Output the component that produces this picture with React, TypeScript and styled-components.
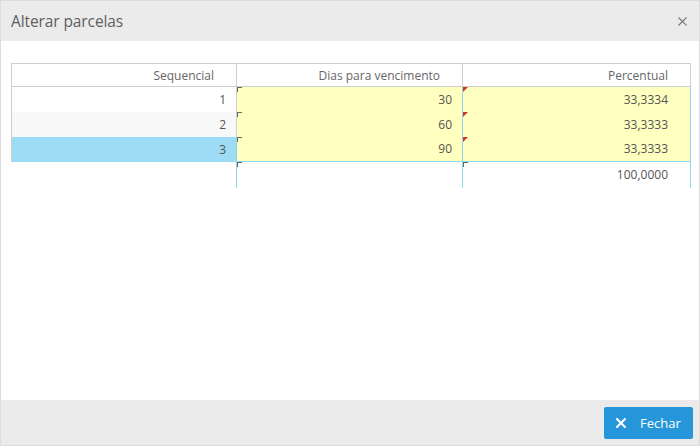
import * as React from "react";
import styled, { createGlobalStyle } from "styled-components";

const GlobalStyle = createGlobalStyle`
  html, body {
    margin: 0;
    padding: 0;
    background: #fff;
  }
  body {
    font-family: "Open Sans", "Liberation Sans", sans-serif;
  }
`;

const Dialog = styled.div`
  width: 700px;
  height: 446px;
  box-sizing: border-box;
  border: 1px solid #dcdcdc;
  display: flex;
  flex-direction: column;
  background: #fff;
`;

const Header = styled.div`
  height: 40px;
  flex: none;
  background: #ebebeb;
  display: flex;
  align-items: center;
  justify-content: space-between;
  padding: 0 12px 0 10px;
`;

const Title = styled.div`
  font-size: 15.5px;
  color: #5e5e5e;
  font-weight: 400;
  letter-spacing: -0.1px;
`;

const CloseButton = styled.button`
  border: 0;
  background: none;
  padding: 0;
  display: flex;
  cursor: pointer;
`;

const Body = styled.div`
  flex: 1;
  padding: 22px 9px 0 10px;
`;

const Table = styled.table`
  border-collapse: collapse;
  table-layout: fixed;
  width: 679px;
  font-size: 12px;
  color: #555;
`;

const HeadCell = styled.th<{ $w: number }>`
  width: ${(p) => p.$w}px;
  height: 23px;
  padding: 0 22px 0 0;
  text-align: right;
  font-weight: 400;
  color: #666;
  border: 1px solid #cfcfcf;
  box-sizing: border-box;
`;

const Row = styled.tr<{ $alt?: boolean }>`
  background: ${(p) => (p.$alt ? "#f8f8f8" : "#fff")};
`;

const SeqCell = styled.td<{ $selected?: boolean }>`
  height: 25px;
  padding: 0 10px 0 0;
  text-align: right;
  color: #555;
  background: ${(p) => (p.$selected ? "#9ddcf4" : "transparent")};
  border-left: 1px solid #cfcfcf;
  border-right: 1px solid ${(p) => (p.$selected ? "#8fd6f1" : "#cfcfcf")};
  box-sizing: border-box;
`;

const EditCell = styled.td<{ $pad: number; $summary?: boolean }>`
  position: relative;
  height: ${(p) => (p.$summary ? 24 : 25)}px;
  padding: 0 ${(p) => p.$pad}px 0 0;
  text-align: right;
  color: #555;
  background: ${(p) => (p.$summary ? "#fff" : "#ffffc0")};
  border-left: 1px solid #8fd6f1;
  border-right: 1px solid #8fd6f1;
  border-top: ${(p) => (p.$summary ? "1px solid #8fd6f1" : "0")};
  box-sizing: border-box;
  vertical-align: middle;
`;

const CornerMark = styled.span`
  position: absolute;
  left: 0;
  top: 0;
  width: 4px;
  height: 4px;
  border-left: 1px solid #666;
  border-top: 1px solid #666;
`;

const RedFlag = styled.span`
  position: absolute;
  left: 0;
  top: 0;
  width: 0;
  height: 0;
  border-top: 5px solid #d8352a;
  border-right: 5px solid transparent;
`;

const EmptyCell = styled.td`
  height: 24px;
`;

const Footer = styled.div`
  height: 45px;
  flex: none;
  background: #ebebeb;
  display: flex;
  align-items: center;
  justify-content: flex-end;
  padding-right: 6px;
`;

const PrimaryButton = styled.button`
  height: 32px;
  width: 89px;
  border: 0;
  border-radius: 2px;
  background: #2596d9;
  color: #fff;
  font-family: "Open Sans", "Liberation Sans", sans-serif;
  font-size: 13px;
  display: flex;
  align-items: center;
  gap: 14px;
  padding: 0 0 0 12px;
  cursor: pointer;
`;

type Parcela = { seq: number; dias: number; pct: string };

const parcelas: Parcela[] = [
  { seq: 1, dias: 30, pct: "33,3334" },
  { seq: 2, dias: 60, pct: "33,3333" },
  { seq: 3, dias: 90, pct: "33,3333" },
];

const SmallX = ({ size, color, width }: { size: number; color: string; width: number }) => (
  <svg width={size} height={size} viewBox="0 0 10 10">
    <path d="M1 1 L9 9 M9 1 L1 9" stroke={color} strokeWidth={width} strokeLinecap="square" />
  </svg>
);

export default function App() {
  const selected = 3;
  return (
    <>
      <GlobalStyle />
      <Dialog>
        <Header>
          <Title>Alterar parcelas</Title>
          <CloseButton>
            <SmallX size={9} color="#777" width={1.3} />
          </CloseButton>
        </Header>
        <Body>
          <Table>
            <thead>
              <tr>
                <HeadCell $w={225}>Sequencial</HeadCell>
                <HeadCell $w={226}>Dias para vencimento</HeadCell>
                <HeadCell $w={228}>Percentual</HeadCell>
              </tr>
            </thead>
            <tbody>
              {parcelas.map((p, i) => (
                <Row key={p.seq} $alt={i % 2 === 1}>
                  <SeqCell $selected={p.seq === selected}>{p.seq}</SeqCell>
                  <EditCell $pad={10}>
                    <CornerMark />
                    {p.dias}
                  </EditCell>
                  <EditCell $pad={22}>
                    <RedFlag />
                    {p.pct}
                  </EditCell>
                </Row>
              ))}
              <tr>
                <EmptyCell />
                <EditCell $pad={10} $summary>
                  <CornerMark />
                </EditCell>
                <EditCell $pad={22} $summary>
                  <CornerMark />
                  100,0000
                </EditCell>
              </tr>
            </tbody>
          </Table>
        </Body>
        <Footer>
          <PrimaryButton>
            <SmallX size={10} color="#fff" width={2} />
            Fechar
          </PrimaryButton>
        </Footer>
      </Dialog>
    </>
  );
}
